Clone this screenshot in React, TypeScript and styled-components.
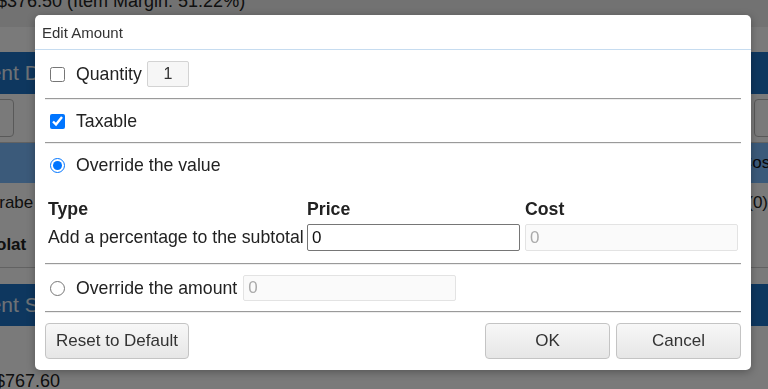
/* eslint-disable */
import React from 'react';
import styled, { createGlobalStyle } from 'styled-components';

const GlobalStyle = createGlobalStyle`
  html, body {
    margin: 0;
    padding: 0;
    overflow: hidden;
    background: #ffffff;
    font-family: 'Liberation Sans', Arial, sans-serif;
    color: #333;
  }
`;

// page behind the modal
const Page = styled.div`
  width: 768px;
  height: 389px;
  overflow: hidden;
  background: #fff;
`;

const TopLine = styled.div`
  height: 26px;
  background: #eeeeee;
  font-size: 18px;
  line-height: 0;
  padding-top: 1px;
  margin-left: -3px;
  color: #222;
`;

const GapBand = styled.div<{ h: number }>`
  height: ${(p) => p.h}px;
`;

const BlueBand = styled.div`
  height: 42px;
  background: #1f74c6;
  color: #e6eef6;
  font-size: 21px;
  display: flex;
  align-items: center;
  margin-left: -64px;
  white-space: nowrap;
`;

const ToolRow = styled.div`
  height: 48px;
  display: flex;
  align-items: center;
  justify-content: space-between;
  border-bottom: 1px solid #ccc;
`;

const GhostButton = styled.div`
  width: 60px;
  height: 36px;
  border: 1px solid #bbb;
  border-radius: 4px;
  margin: 0 -48px;
`;

const HeadBand = styled.div`
  height: 40px;
  background: #7cbcff;
  display: flex;
  align-items: center;
  justify-content: flex-end;
  font-size: 17px;
  color: #111;
  margin-right: -7px;
`;

const BgRow = styled.div<{ bold?: boolean }>`
  height: ${(p) => (p.bold ? 44 : 40)}px;
  display: flex;
  align-items: center;
  justify-content: space-between;
  font-size: 17px;
  font-weight: ${(p) => (p.bold ? 700 : 400)};
  color: #222;
  margin: ${(p) => (p.bold ? '0 0 0 -4px' : '0 0 0 -14px')};
  border-bottom: ${(p) => (p.bold ? '1px solid #ccc' : 'none')};
`;

const Total = styled.div`
  font-size: 18px;
  margin-left: -5px;
  padding-top: 45px;
  color: #222;
`;

const Overlay = styled.div`
  position: fixed;
  inset: 0;
  background: rgba(0, 0, 0, 0.52);
`;

// the modal dialog
const Dialog = styled.div`
  position: absolute;
  left: 35px;
  top: 15px;
  width: 716px;
  background: #fff;
  border-radius: 5px;
  box-shadow: 0 2px 8px rgba(0, 0, 0, 0.3);
  overflow: hidden;
`;

const Header = styled.div`
  height: 34px;
  display: flex;
  align-items: center;
  padding: 0 7px;
  font-size: 15px;
  color: #333;
  border-bottom: 1px solid #c6dcf0;
`;

const Body = styled.div`
  padding: 0 10px;
`;

const Row = styled.label<{ h: number }>`
  height: ${(p) => p.h}px;
  display: flex;
  align-items: center;
  padding-left: 5px;
  font-size: 17.7px;
  color: #222;
  white-space: nowrap;
`;

const Check = styled.input`
  width: 15px;
  height: 15px;
  margin: 0 11px 0 0;
  accent-color: #0075ff;
`;

const QtyInput = styled.input`
  width: 42px;
  height: 26px;
  box-sizing: border-box;
  margin-left: 5px;
  border: 1px solid #d3d3d3;
  border-radius: 2px;
  background: #f6f6f6;
  text-align: center;
  font-family: inherit;
  font-size: 16px;
  color: #333;
`;

const Divider = styled.hr`
  margin: 0;
  border: 0;
  border-top: 1px solid #9a9a9a;
  border-bottom: 1px solid #eeeeee;
`;

const Grid = styled.div`
  display: grid;
  grid-template-columns: 260px 218px 1fr;
  margin-top: 10px;
  padding-bottom: 10px;
  font-size: 17.7px;
  color: #222;
`;

const HeadCell = styled.div<{ first?: boolean }>`
  height: 25px;
  display: flex;
  align-items: center;
  padding: 0 3px 0 ${(p) => (p.first ? 3 : 2)}px;
  font-weight: 700;
`;

const Cell = styled.div<{ first?: boolean }>`
  padding: 2px 3px 2px ${(p) => (p.first ? 3 : 2)}px;
  display: flex;
  align-items: center;
  white-space: nowrap;
`;

const TextInput = styled.input<{ w?: number }>`
  width: ${(p) => (p.w ? `${p.w}px` : '100%')};
  height: 27px;
  box-sizing: border-box;
  margin: 0;
  padding: 0 4px;
  border: 1px solid #767676;
  border-radius: 2px;
  background: #fff;
  font-family: inherit;
  font-size: 17px;
  color: #111;
  &:disabled {
    background: #fafafa;
    border-color: #e3e3e3;
    color: #aaa;
  }
`;

const AmountInput = styled(TextInput)`
  height: 26px;
  margin-left: 6px;
`;

const Footer = styled.div`
  display: flex;
  gap: 6px;
  padding: 10px 10px 11px;
`;

const Button = styled.button<{ w: number; push?: boolean }>`
  width: ${(p) => p.w}px;
  height: 36px;
  margin-left: ${(p) => (p.push ? 'auto' : '0')};
  border: 1px solid #c4c4c4;
  border-radius: 4px;
  background: linear-gradient(#f7f7f7, #e6e6e6);
  font-family: inherit;
  font-size: 17px;
  color: #333;
  cursor: pointer;
`;

const App = () => {
  return (
    <>
      <GlobalStyle />
      <Page>
        <TopLine>$376.50 (Item Margin: 51.22%)</TopLine>
        <GapBand h={25} />
        <BlueBand>Payment Details</BlueBand>
        <ToolRow>
          <GhostButton />
          <GhostButton />
        </ToolRow>
        <HeadBand>Cost</HeadBand>
        <BgRow>
          <span>Grabe</span>
          <span>(0)</span>
        </BgRow>
        <BgRow bold>
          <span>olat</span>
          <span />
        </BgRow>
        <GapBand h={16} />
        <BlueBand>Payment Summary</BlueBand>
        <Total>$767.60</Total>
      </Page>
      <Overlay />
      <Dialog>
        <Header>Edit Amount</Header>
        <Body>
          <Row h={48}>
            <Check type="checkbox" />
            Quantity
            <QtyInput defaultValue="1" readOnly />
          </Row>
          <Divider />
          <Row h={42}>
            <Check type="checkbox" defaultChecked />
            Taxable
          </Row>
          <Divider />
          <Row h={43}>
            <Check type="radio" name="mode" defaultChecked />
            Override the value
          </Row>
          <Grid>
            <HeadCell first>Type</HeadCell>
            <HeadCell>Price</HeadCell>
            <HeadCell>Cost</HeadCell>
            <Cell first>Add a percentage to the subtotal</Cell>
            <Cell>
              <TextInput defaultValue="0" />
            </Cell>
            <Cell>
              <TextInput defaultValue="0" disabled />
            </Cell>
          </Grid>
          <Divider />
          <Row h={46}>
            <Check type="radio" name="mode" />
            Override the amount
            <AmountInput w={213} defaultValue="0" disabled />
          </Row>
          <Divider />
        </Body>
        <Footer>
          <Button w={144}>Reset to Default</Button>
          <Button w={125} push>
            OK
          </Button>
          <Button w={125}>Cancel</Button>
        </Footer>
      </Dialog>
    </>
  );
};

export default App;
